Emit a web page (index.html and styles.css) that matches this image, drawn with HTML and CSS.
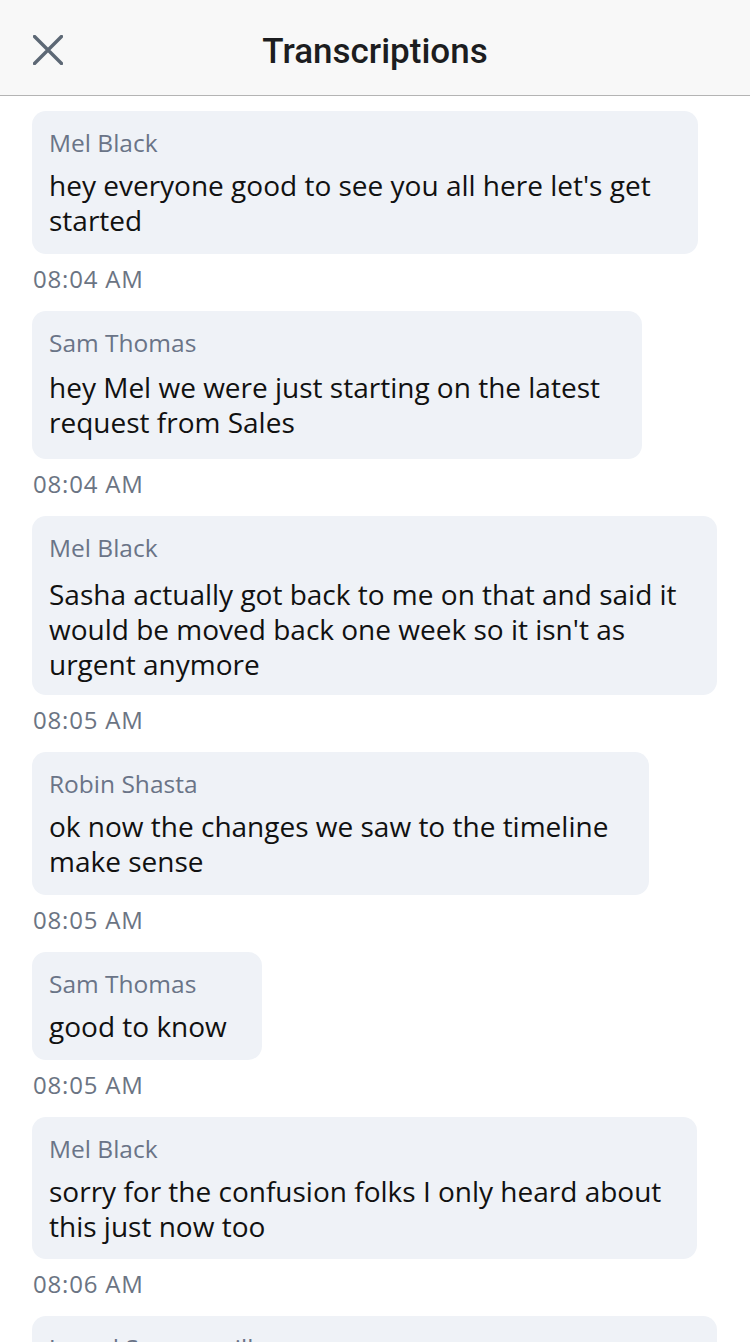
FILE: index.html
```html
<!DOCTYPE html>
<html lang="en">
<head>
<meta charset="utf-8">
<title>Transcriptions</title>
<link rel="stylesheet" href="styles.css">
</head>
<body>
<div class="app">
  <header class="topbar">
    <button class="close" aria-label="Close">
      <svg width="30" height="30" viewBox="0 0 30 30"><path d="M1.5 1.5 L28.5 28.5 M28.5 1.5 L1.5 28.5" stroke="#5d6875" stroke-width="3.4" stroke-linecap="round" fill="none"/></svg>
    </button>
    <h1 class="title">Transcriptions</h1>
  </header>
  <main class="list">
    <div class="entry">
      <div class="bubble w1">
        <div class="name">Mel Black</div>
        <div class="text">hey everyone good to see you all here let's get started</div>
      </div>
      <div class="time">08:04 AM</div>
    </div>
    <div class="entry">
      <div class="bubble w2 tall">
        <div class="name">Sam Thomas</div>
        <div class="text">hey Mel we were just starting on the latest request from Sales</div>
      </div>
      <div class="time">08:04 AM</div>
    </div>
    <div class="entry">
      <div class="bubble w3 shifted">
        <div class="name">Mel Black</div>
        <div class="text">Sasha actually got back to me on that and said it would be moved back one week so it isn't as urgent anymore</div>
      </div>
      <div class="time">08:05 AM</div>
    </div>
    <div class="entry">
      <div class="bubble w4">
        <div class="name">Robin Shasta</div>
        <div class="text">ok now the changes we saw to the timeline make sense</div>
      </div>
      <div class="time">08:05 AM</div>
    </div>
    <div class="entry">
      <div class="bubble w5">
        <div class="name">Sam Thomas</div>
        <div class="text">good to know</div>
      </div>
      <div class="time">08:05 AM</div>
    </div>
    <div class="entry">
      <div class="bubble w6 short">
        <div class="name">Mel Black</div>
        <div class="text">sorry for the confusion folks I only heard about this just now too</div>
      </div>
      <div class="time">08:06 AM</div>
    </div>
    <div class="entry">
      <div class="bubble w7">
        <div class="name">Jarrod Sommerville</div>
        <div class="text">that works for me</div>
      </div>
      <div class="time">08:06 AM</div>
    </div>
  </main>
</div>
</body>
</html>
```
FILE: styles.css
```css
* { box-sizing: border-box; }
html, body { margin: 0; padding: 0; background: #ffffff; }
body { font-family: "Open Sans", "Noto Sans", sans-serif; color: #111111; }
.app { width: 750px; height: 1342px; overflow: hidden; }
.topbar {
  height: 96px;
  background: #f8f8f8;
  border-bottom: 1px solid #b4b4b4;
  display: flex;
  align-items: center;
  justify-content: center;
  position: relative;
}
.close {
  position: absolute;
  left: 33px;
  top: 35px;
  width: 30px;
  height: 30px;
  padding: 0;
  border: 0;
  background: none;
  display: flex;
}
.title {
  margin: 0;
  font-family: Roboto, "Liberation Sans", sans-serif;
  font-weight: 500;
  font-size: 35px;
  color: #1c1d20;
  line-height: 40px;
  margin-top: 9px;
}
.list { padding: 15px 32px 0 32px; display: flex; flex-direction: column; }
.entry { display: flex; flex-direction: column; align-items: flex-start; margin-bottom: 17px; }
.bubble {
  background: #eff2f7;
  border-radius: 14px;
  padding: 17px 16px 16px 17px;
}
.name {
  font-size: 24.5px;
  line-height: 30px;
  color: #6a7487;
}
.text {
  margin-top: 10px;
  font-size: 28px;
  line-height: 35px;
  color: #111111;
}
.bubble.tall { padding-bottom: 19px; }
.bubble.tall .text { margin-top: 12px; }
.bubble.shifted { padding-bottom: 13px; }
.bubble.shifted .text { margin-top: 14px; }
.bubble.short { padding-bottom: 15px; }
.time {
  margin-top: 10px;
  margin-left: 1px;
  font-size: 24px;
  letter-spacing: 0.8px;
  line-height: 30px;
  color: #6b7483;
}
.w1 { width: 666px; }
.w2 { width: 610px; }
.w3 { width: 685px; }
.w4 { width: 617px; }
.w5 { width: 230px; }
.w6 { width: 665px; }
.w7 { width: 685px; }
```
